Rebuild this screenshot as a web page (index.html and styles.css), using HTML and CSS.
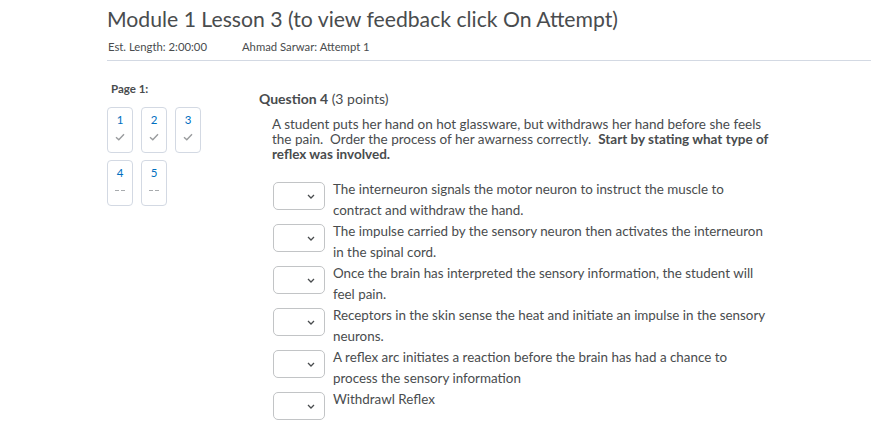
FILE: index.html
```html
<!DOCTYPE html>
<html>
<head>
<meta charset="utf-8">
<link rel="stylesheet" href="styles.css">
</head>
<body>
<div class="page">
  <header class="header">
    <h1 class="title">Module 1 Lesson 3 (to view feedback click On Attempt)</h1>
    <div class="meta">
      <span class="meta-item">Est. Length: 2:00:00</span>
      <span class="meta-item">Ahmad Sarwar: Attempt 1</span>
    </div>
  </header>
  <div class="main">
    <nav class="nav">
      <div class="nav-label">Page 1:</div>
      <div class="nav-grid">
        <div class="qbox"><span class="num">1</span><span class="mark check"><svg width="10" height="8" viewBox="0 0 10 8"><path d="M1 4.2 L3.8 6.8 L9 1.2" fill="none" stroke="#9a9c9e" stroke-width="1.4"/></svg></span></div>
        <div class="qbox"><span class="num">2</span><span class="mark check"><svg width="10" height="8" viewBox="0 0 10 8"><path d="M1 4.2 L3.8 6.8 L9 1.2" fill="none" stroke="#9a9c9e" stroke-width="1.4"/></svg></span></div>
        <div class="qbox"><span class="num">3</span><span class="mark check"><svg width="10" height="8" viewBox="0 0 10 8"><path d="M1 4.2 L3.8 6.8 L9 1.2" fill="none" stroke="#9a9c9e" stroke-width="1.4"/></svg></span></div>
        <div class="qbox"><span class="num">4</span><span class="mark dash"><i></i><i></i></span></div>
        <div class="qbox"><span class="num">5</span><span class="mark dash"><i></i><i></i></span></div>
      </div>
    </nav>
    <section class="question">
      <h2 class="q-title">Question 4 <span class="pts">(3 points)</span></h2>
      <p class="q-text">A student puts her hand on hot glassware, but withdraws her hand before she feels the pain.&nbsp; Order the process of her awarness correctly.&nbsp; <b>Start by stating what type of reflex was involved.</b></p>
      <div class="items">
        <div class="item"><div class="sel"><svg width="8" height="5" viewBox="0 0 8 5"><path d="M1 1 L4 4 L7 1" fill="none" stroke="#494c4e" stroke-width="1.3"/></svg></div><div class="item-text">The interneuron signals the motor neuron to instruct the muscle to contract and withdraw the hand.</div></div>
        <div class="item"><div class="sel"><svg width="8" height="5" viewBox="0 0 8 5"><path d="M1 1 L4 4 L7 1" fill="none" stroke="#494c4e" stroke-width="1.3"/></svg></div><div class="item-text">The impulse carried by the sensory neuron then activates the interneuron in the spinal cord.</div></div>
        <div class="item"><div class="sel"><svg width="8" height="5" viewBox="0 0 8 5"><path d="M1 1 L4 4 L7 1" fill="none" stroke="#494c4e" stroke-width="1.3"/></svg></div><div class="item-text">Once the brain has interpreted the sensory information, the student will feel pain.</div></div>
        <div class="item"><div class="sel"><svg width="8" height="5" viewBox="0 0 8 5"><path d="M1 1 L4 4 L7 1" fill="none" stroke="#494c4e" stroke-width="1.3"/></svg></div><div class="item-text">Receptors in the skin sense the heat and initiate an impulse in the sensory neurons.</div></div>
        <div class="item"><div class="sel"><svg width="8" height="5" viewBox="0 0 8 5"><path d="M1 1 L4 4 L7 1" fill="none" stroke="#494c4e" stroke-width="1.3"/></svg></div><div class="item-text">A reflex arc initiates a reaction before the brain has had a chance to process the sensory information</div></div>
        <div class="item"><div class="sel"><svg width="8" height="5" viewBox="0 0 8 5"><path d="M1 1 L4 4 L7 1" fill="none" stroke="#494c4e" stroke-width="1.3"/></svg></div><div class="item-text">Withdrawl Reflex</div></div>
      </div>
    </section>
  </div>
</div>
</body>
</html>
```
FILE: styles.css
```css
html, body {
  margin: 0;
  padding: 0;
  background: #fff;
}
body {
  font-family: Lato, "Open Sans", sans-serif;
  color: #494c4e;
  overflow: hidden;
}
.page {
  padding-left: 107px;
}
.header {
  border-bottom: 1px solid #d3d9e3;
  padding-bottom: 6px;
}
.title {
  margin: 0;
  padding-top: 6px;
  font-size: 21.2px;
  font-weight: 400;
  line-height: 26px;
  color: #494c4e;
}
.meta {
  display: flex;
  gap: 35px;
  margin-top: 8px;
  font-size: 11.3px;
  line-height: 14px;
  padding-left: 1px;
}
.main {
  display: flex;
  padding-top: 20px;
}
.nav {
  width: 152px;
  flex: none;
}
.nav-label {
  font-size: 11.5px;
  font-weight: 700;
  line-height: 14px;
  padding-left: 4px;
  margin-top: 1px;
}
.nav-grid {
  display: grid;
  grid-template-columns: repeat(3, 26px);
  column-gap: 8px;
  row-gap: 7px;
  margin-top: 11px;
}
.qbox {
  box-sizing: border-box;
  height: 46px;
  border: 1px solid #d3d9e3;
  border-radius: 4px;
  display: flex;
  flex-direction: column;
  align-items: center;
  padding-top: 5px;
}
.num {
  font-size: 11.5px;
  line-height: 14px;
  color: #006fbf;
}
.mark {
  margin-top: 5px;
  height: 10px;
  display: flex;
  align-items: center;
}
.dash {
  gap: 2px;
}
.dash i {
  display: block;
  width: 4px;
  height: 1px;
  background: #a8abae;
}
.question {
  flex: 1;
}
.q-title {
  margin: 0;
  margin-top: 9px;
  font-size: 14px;
  font-weight: 700;
  line-height: 18px;
  color: #494c4e;
}
.pts {
  font-weight: 400;
}
.q-text {
  margin: 9px 0 0 13px;
  font-size: 13.5px;
  line-height: 15px;
  width: 502px;
}
.items {
  margin-top: 20px;
  margin-left: 14px;
  display: flex;
  flex-direction: column;
}
.item {
  display: flex;
  align-items: flex-start;
  height: 42px;
}
.sel {
  box-sizing: border-box;
  width: 52px;
  height: 28px;
  border: 1px solid #c2c4c6;
  border-radius: 5px;
  display: flex;
  align-items: center;
  justify-content: flex-end;
  padding-right: 9px;
  flex: none;
}
.sel svg {
  margin-top: 1px;
}
.item-text {
  margin-left: 8px;
  font-size: 13.4px;
  line-height: 21px;
  width: 442px;
  margin-top: -3px;
}
```
